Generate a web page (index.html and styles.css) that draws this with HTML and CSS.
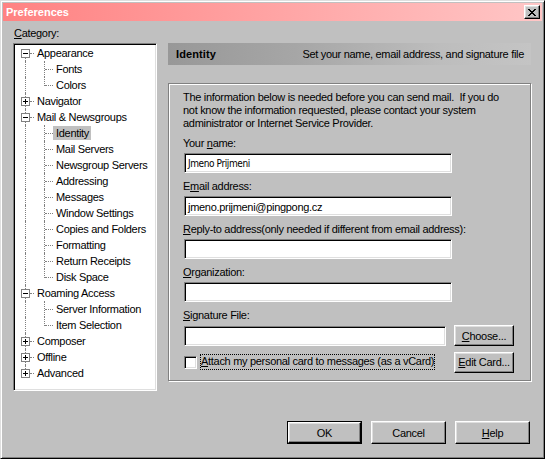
FILE: index.html
```html
<!DOCTYPE html>
<html>
<head>
<meta charset="utf-8">
<title>Preferences</title>
<link rel="stylesheet" href="styles.css">
</head>
<body>
<div class="window">
  <div class="titlebar">
    <span class="title">Preferences</span>
    <button class="close" aria-label="Close">
      <svg width="8" height="7" viewBox="0 0 8 7" shape-rendering="crispEdges">
        <rect x="0" y="0" width="2" height="1"/><rect x="6" y="0" width="2" height="1"/>
        <rect x="1" y="1" width="2" height="1"/><rect x="5" y="1" width="2" height="1"/>
        <rect x="2" y="2" width="4" height="1"/>
        <rect x="3" y="3" width="2" height="1"/>
        <rect x="2" y="4" width="4" height="1"/>
        <rect x="1" y="5" width="2" height="1"/><rect x="5" y="5" width="2" height="1"/>
        <rect x="0" y="6" width="2" height="1"/><rect x="6" y="6" width="2" height="1"/>
      </svg>
    </button>
  </div>

  <div class="content">
    <div class="leftcol">
      <div class="catlabel"><u>C</u>ategory:</div>
      <div class="tree">
        <div class="row"><span class="cell exp first"><svg class="box" width="9" height="9" viewBox="0 0 9 9" shape-rendering="crispEdges"><rect x="0.5" y="0.5" width="8" height="8" fill="#fff" stroke="#808080"/><rect x="2" y="4" width="5" height="1" fill="#000"/></svg></span><span class="label">Appearance</span></div>
        <div class="row"><span class="cell v"></span><span class="cell t"></span><span class="label">Fonts</span></div>
        <div class="row"><span class="cell v"></span><span class="cell l"></span><span class="label">Colors</span></div>
        <div class="row"><span class="cell exp"><svg class="box" width="9" height="9" viewBox="0 0 9 9" shape-rendering="crispEdges"><rect x="0.5" y="0.5" width="8" height="8" fill="#fff" stroke="#808080"/><rect x="2" y="4" width="5" height="1" fill="#000"/><rect x="4" y="2" width="1" height="5" fill="#000"/></svg></span><span class="label">Navigator</span></div>
        <div class="row"><span class="cell exp"><svg class="box" width="9" height="9" viewBox="0 0 9 9" shape-rendering="crispEdges"><rect x="0.5" y="0.5" width="8" height="8" fill="#fff" stroke="#808080"/><rect x="2" y="4" width="5" height="1" fill="#000"/></svg></span><span class="label">Mail &amp; Newsgroups</span></div>
        <div class="row"><span class="cell v"></span><span class="cell t"></span><span class="label selected">Identity</span></div>
        <div class="row"><span class="cell v"></span><span class="cell t"></span><span class="label">Mail Servers</span></div>
        <div class="row"><span class="cell v"></span><span class="cell t"></span><span class="label">Newsgroup Servers</span></div>
        <div class="row"><span class="cell v"></span><span class="cell t"></span><span class="label">Addressing</span></div>
        <div class="row"><span class="cell v"></span><span class="cell t"></span><span class="label">Messages</span></div>
        <div class="row"><span class="cell v"></span><span class="cell t"></span><span class="label">Window Settings</span></div>
        <div class="row"><span class="cell v"></span><span class="cell t"></span><span class="label">Copies and Folders</span></div>
        <div class="row"><span class="cell v"></span><span class="cell t"></span><span class="label">Formatting</span></div>
        <div class="row"><span class="cell v"></span><span class="cell t"></span><span class="label">Return Receipts</span></div>
        <div class="row"><span class="cell v"></span><span class="cell l"></span><span class="label">Disk Space</span></div>
        <div class="row"><span class="cell exp"><svg class="box" width="9" height="9" viewBox="0 0 9 9" shape-rendering="crispEdges"><rect x="0.5" y="0.5" width="8" height="8" fill="#fff" stroke="#808080"/><rect x="2" y="4" width="5" height="1" fill="#000"/></svg></span><span class="label">Roaming Access</span></div>
        <div class="row"><span class="cell v"></span><span class="cell t"></span><span class="label">Server Information</span></div>
        <div class="row"><span class="cell v"></span><span class="cell l"></span><span class="label">Item Selection</span></div>
        <div class="row"><span class="cell exp"><svg class="box" width="9" height="9" viewBox="0 0 9 9" shape-rendering="crispEdges"><rect x="0.5" y="0.5" width="8" height="8" fill="#fff" stroke="#808080"/><rect x="2" y="4" width="5" height="1" fill="#000"/><rect x="4" y="2" width="1" height="5" fill="#000"/></svg></span><span class="label">Composer</span></div>
        <div class="row"><span class="cell exp"><svg class="box" width="9" height="9" viewBox="0 0 9 9" shape-rendering="crispEdges"><rect x="0.5" y="0.5" width="8" height="8" fill="#fff" stroke="#808080"/><rect x="2" y="4" width="5" height="1" fill="#000"/><rect x="4" y="2" width="1" height="5" fill="#000"/></svg></span><span class="label">Offline</span></div>
        <div class="row"><span class="cell exp last"><svg class="box" width="9" height="9" viewBox="0 0 9 9" shape-rendering="crispEdges"><rect x="0.5" y="0.5" width="8" height="8" fill="#fff" stroke="#808080"/><rect x="2" y="4" width="5" height="1" fill="#000"/><rect x="4" y="2" width="1" height="5" fill="#000"/></svg></span><span class="label">Advanced</span></div>
      </div>
    </div>

    <div class="rightcol">
      <div class="band">
        <span class="band-title">Identity</span>
        <span class="band-desc">Set your name, email address, and signature file</span>
      </div>
      <div class="group">
        <p class="intro">The information below is needed before you can send mail.&nbsp; If you do<br>not know the information requested, please contact your system<br>administrator or Internet Service Provider.</p>

        <div class="field">
          <div class="flabel">Your <u>n</u>ame:</div>
          <div class="input narrow">Jmeno Prijmeni</div>
        </div>
        <div class="field">
          <div class="flabel">E<u>m</u>ail address:</div>
          <div class="input">jmeno.prijmeni@pingpong.cz</div>
        </div>
        <div class="field">
          <div class="flabel"><u>R</u>eply-to address(only needed if different from email address):</div>
          <div class="input"></div>
        </div>
        <div class="field">
          <div class="flabel"><u>O</u>rganization:</div>
          <div class="input"></div>
        </div>
        <div class="field last">
          <div class="flabel"><u>S</u>ignature File:</div>
          <div class="sigrow">
            <div class="input sig"></div>
            <button class="btn side"><u>C</u>hoose...</button>
          </div>
        </div>
        <div class="checkrow">
          <span class="checkbox"></span>
          <span class="checklabel"><u>A</u>ttach my personal card to messages (as a vCard)</span>
          <button class="btn side"><u>E</u>dit Card...</button>
        </div>
      </div>
    </div>
  </div>

  <div class="footer">
    <span class="default"><button class="btn foot">OK</button></span>
    <button class="btn foot">Cancel</button>
    <button class="btn foot"><u>H</u>elp</button>
  </div>
</div>
</body>
</html>
```

FILE: styles.css
```css
* { box-sizing: border-box; }

html, body {
  margin: 0;
  padding: 0;
  background: #c0c0c0;
}

body {
  font-family: "Liberation Sans", Arial, sans-serif;
  font-size: 11px;
  letter-spacing: -0.3px;
  color: #000;
}

u { text-decoration: underline; text-underline-offset: 1px; }

.window {
  width: 545px;
  height: 459px;
  background: #c0c0c0;
  border: 1px solid;
  border-color: #dfdfdf #000 #000 #dfdfdf;
  box-shadow: inset 1px 1px #fff, inset -1px -1px #808080;
  padding: 2px;
  display: flex;
  flex-direction: column;
}

.titlebar {
  height: 18px;
  background: linear-gradient(to right, #ff8282, #ffc6c6);
  display: flex;
  align-items: center;
  justify-content: space-between;
  padding: 0 2px 0 3px;
  flex: none;
}

.title {
  color: #fff;
  font-weight: bold;
  font-size: 11px;
  line-height: 13px;
  letter-spacing: 0;
}

.close {
  width: 16px;
  height: 14px;
  padding: 0;
  margin: 0;
  background: #c0c0c0;
  border: 1px solid;
  border-color: #fff #000 #000 #fff;
  box-shadow: inset -1px -1px #808080, inset 1px 1px #dfdfdf;
  display: flex;
  align-items: center;
  justify-content: center;
}

.close svg { display: block; fill: #000; }

.content {
  display: flex;
  gap: 11px;
  padding: 0 10px 0 10px;
  flex: none;
}

.leftcol {
  width: 144px;
  flex: none;
  display: flex;
  flex-direction: column;
}

.catlabel {
  line-height: 13px;
  padding-top: 6px;
  margin-bottom: 3px;
  padding-left: 1px;
}

.tree {
  height: 348px;
  background: #fff;
  border: 1px solid;
  border-color: #808080 #fff #fff #808080;
  box-shadow: inset 1px 1px #000, inset -1px -1px #dfdfdf;
  padding: 1px;
}

.row {
  display: flex;
  align-items: center;
  height: 16px;
}

.cell {
  position: relative;
  flex: none;
  width: 19px;
  height: 16px;
}

.cell.v::before,
.cell.t::before,
.cell.l::before,
.cell.exp::before {
  content: "";
  position: absolute;
  left: 10px;
  top: 0;
  height: 16px;
  border-left: 1px dotted #808080;
}

.cell.l::before { height: 9px; }
.cell.exp.first::before { top: 8px; height: 8px; }
.cell.exp.last::before { height: 8px; }

.cell.t::after,
.cell.l::after {
  content: "";
  position: absolute;
  left: 11px;
  top: 8px;
  width: 8px;
  border-top: 1px dotted #808080;
}

.cell.exp::after {
  content: "";
  position: absolute;
  left: 15px;
  top: 8px;
  width: 4px;
  border-top: 1px dotted #808080;
}

.box {
  position: relative;
  display: block;
  margin: 4px 0 0 6px;
}

.label {
  line-height: 14px;
  padding: 0 2px 0 3px;
  white-space: nowrap;
}

.label.selected { background: #c0c0c0; }

.rightcol {
  flex: 1;
  display: flex;
  flex-direction: column;
  padding-top: 22px;
}

.band {
  height: 22px;
  background: linear-gradient(to right, #989898 0%, #a6a6a6 35%, #bdbdbd 75%, #c4c4c4 100%);
  display: flex;
  align-items: center;
  justify-content: space-between;
  padding: 0 7px 0 8px;
  margin-right: 1px;
}

.band-title {
  font-weight: bold;
  font-size: 11px;
  letter-spacing: 0.1px;
}

.band-desc { white-space: nowrap; }

.group {
  margin-top: 18px;
  margin-right: 1px;
  border: 1px solid #808080;
  box-shadow: inset 1px 1px #fff, 1px 1px #fff;
  padding: 6px 8px 8px 15px;
}

.intro {
  margin: 0 0 7px 0;
  line-height: 13px;
  white-space: nowrap;
  margin-left: -1px;
  padding-top: 1px;
}

.field { margin-bottom: 7px; }
.field.last { margin-bottom: 6px; }

.flabel {
  line-height: 13px;
  margin-bottom: 3px;
  white-space: nowrap;
  margin-left: -1px;
}

.input {
  width: 268px;
  height: 20px;
  background: #fff;
  border: 1px solid;
  border-color: #808080 #fff #fff #808080;
  box-shadow: inset 1px 1px #000, inset -1px -1px #dfdfdf;
  padding: 3px 3px 0 3px;
  line-height: 14px;
  white-space: nowrap;
}

.input.narrow {
  font-family: "DejaVu Sans", sans-serif;
  font-stretch: condensed;
  font-size: 10px;
  letter-spacing: -0.4px;
}

.sigrow {
  display: flex;
  align-items: center;
  gap: 8px;
}

.input.sig { width: 262px; }

.btn {
  font-family: inherit;
  font-size: 11px;
  letter-spacing: inherit;
  color: #000;
  background: #c0c0c0;
  border: 1px solid;
  border-color: #fff #000 #000 #fff;
  box-shadow: inset -1px -1px #808080, inset 1px 1px #dfdfdf;
  padding: 0;
  margin: 0;
}

.btn.side {
  width: 60px;
  height: 21px;
  flex: none;
}

.checkrow {
  display: flex;
  align-items: center;
  height: 20px;
  width: 330px;
}

.checkbox {
  width: 13px;
  height: 13px;
  flex: none;
  background: #fff;
  border: 1px solid;
  border-color: #808080 #fff #fff #808080;
  box-shadow: inset 1px 1px #000, inset -1px -1px #dfdfdf;
}

.checklabel {
  margin-left: 3px;
  padding: 1px 1px 2px 1px;
  line-height: 13px;
  outline: 1px dotted #000;
  outline-offset: -1px;
  white-space: nowrap;
}

.checkrow .btn.side { margin-left: auto; }

.footer {
  display: flex;
  justify-content: flex-end;
  align-items: center;
  gap: 9px;
  padding: 0 12px 0 0;
  margin-top: 30px;
}

.btn.foot {
  width: 75px;
  height: 23px;
}

.default {
  display: block;
  border: 1px solid #000;
  width: 75px;
  height: 23px;
}

.default .btn.foot {
  display: block;
  width: 73px;
  height: 21px;
}
```
